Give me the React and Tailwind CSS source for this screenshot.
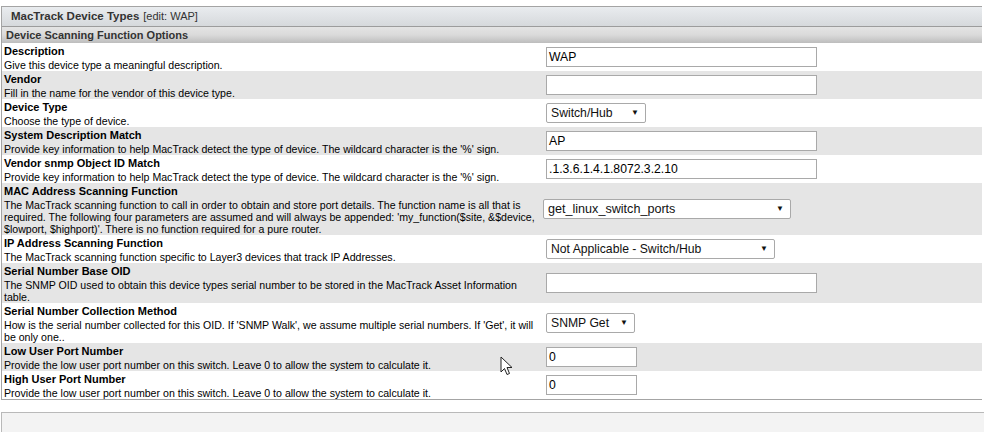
import React from 'react';

const desc = "Provide key information to help MacTrack detect the type of device. The wildcard character is the '%' sign.";
const portDesc = 'Provide the low user port number on this switch. Leave 0 to allow the system to calculate it.';

const rows = [
  { label: 'Description', text: 'Give this device type a meaningful description.', kind: 'input', value: 'WAP', w: 'w-[271px]' },
  { label: 'Vendor', text: 'Fill in the name for the vendor of this device type.', kind: 'input', value: '', w: 'w-[271px]' },
  { label: 'Device Type', text: 'Choose the type of device.', kind: 'select', value: 'Switch/Hub', w: 'w-[100px]' },
  { label: 'System Description Match', text: desc, kind: 'input', value: 'AP', w: 'w-[271px]' },
  { label: 'Vendor snmp Object ID Match', text: desc, kind: 'input', value: '.1.3.6.1.4.1.8072.3.2.10', w: 'w-[271px]' },
  {
    label: 'MAC Address Scanning Function',
    text: "The MacTrack scanning function to call in order to obtain and store port details. The function name is all that is required. The following four parameters are assumed and will always be appended: 'my_function($site, &$device, $lowport, $highport)'. There is no function required for a pure router.",
    kind: 'select', value: 'get_linux_switch_ports', w: 'w-[248px] -ml-[3px]', big: true,
  },
  { label: 'IP Address Scanning Function', text: 'The MacTrack scanning function specific to Layer3 devices that track IP Addresses.', kind: 'select', value: 'Not Applicable - Switch/Hub', w: 'w-[229px]' },
  { label: 'Serial Number Base OID', text: 'The SNMP OID used to obtain this device types serial number to be stored in the MacTrack Asset Information table.', kind: 'input', value: '', w: 'w-[271px]' },
  { label: 'Serial Number Collection Method', text: "How is the serial number collected for this OID. If 'SNMP Walk', we assume multiple serial numbers. If 'Get', it will be only one..", kind: 'select', value: 'SNMP Get', w: 'w-[89px]' },
  { label: 'Low User Port Number', text: portDesc, kind: 'input', value: '0', w: 'w-[91px]' },
  { label: 'High User Port Number', text: portDesc, kind: 'input', value: '0', w: 'w-[91px]' },
];

function Field({ row }) {
  if (row.kind === 'input') {
    return (
      <div className={`${row.w} h-[20px] border border-[#a9a9a9] bg-white px-[2px] text-[12.2px] leading-[18px] text-black`}>
        {row.value}
      </div>
    );
  }
  return (
    <div className={`${row.w} h-[20px] border border-[#a9a9a9] rounded-[2px] bg-white pl-[4px] pr-[6px] flex items-center justify-between text-[#111] ${row.big ? 'text-[12.6px]' : 'text-[12.2px]'}`}>
      <span>{row.value}</span>
      <span className="text-[8px] leading-none">▼</span>
    </div>
  );
}

export default function App() {
  return (
    <div className="relative w-[984px] h-[432px] bg-white overflow-hidden font-['Liberation_Sans',Arial,sans-serif]">
      <div className="pt-[6px] pl-[1px] pr-[2px]">
        <div className="border-t border-l border-b border-[#a4a4a4]">
          <div className="h-[20px] bg-gradient-to-b from-[#e9ecef] to-[#d6d9dc] border-b border-[#9c9c9c] pl-[9px] flex items-center text-[#333]">
            <span className="text-[11.5px] font-bold">MacTrack Device Types</span>
            <span className="text-[11px] ml-[4px]">[edit: WAP]</span>
          </div>
          <div className="h-[16px] bg-gradient-to-b from-[#e4e4e4] via-[#dadada] to-[#bdbdbd] pl-[4px] flex items-center text-[11px] font-bold text-[#333]">
            Device Scanning Function Options
          </div>
          {rows.map((row, i) => (
            <div key={row.label} className={`flex items-center ${i % 2 ? 'bg-[#e5e5e5]' : 'bg-white'}`}>
              <div className="w-[544px] shrink-0 pl-[2px] pr-[6px] pt-[1px] text-black">
                <div className="text-[11px] leading-[15px] font-bold">{row.label}</div>
                <div className="text-[10.6px] leading-[12px]">{row.text}</div>
              </div>
              <Field row={row} />
            </div>
          ))}
        </div>
      </div>
      <div className="mt-[12px] ml-[1px] h-[40px] border-t border-l border-[#b9b9b9] bg-[#f3f3f3]" />
      <svg className="absolute left-[500px] top-[356px]" width="14" height="21" viewBox="0 0 14 21">
        <path d="M1 1 L1 16 L4.5 12.5 L7 18.5 L9.5 17.5 L7 11.5 L12 11.5 Z" fill="white" stroke="#222" strokeWidth="1" strokeLinejoin="round" />
      </svg>
    </div>
  );
}
